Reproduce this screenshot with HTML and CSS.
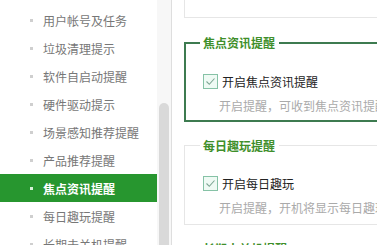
FILE: index.html
```html
<!DOCTYPE html>
<html lang="zh-CN">
<head>
    <meta charset="UTF-8">
    <title>消息提醒设置</title>
    <link rel="stylesheet" href="styles.css">
</head>
<body>
    <div class="page">
        <div class="sidebar">
            <ul class="nav">
                <li class="nav-item">用户帐号及任务</li>
                <li class="nav-item">垃圾清理提示</li>
                <li class="nav-item">软件自启动提醒</li>
                <li class="nav-item">硬件驱动提示</li>
                <li class="nav-item">场景感知推荐提醒</li>
                <li class="nav-item">产品推荐提醒</li>
                <li class="nav-item active">焦点资讯提醒</li>
                <li class="nav-item">每日趣玩提醒</li>
                <li class="nav-item">长期未关机提醒</li>
            </ul>
            <div class="scrollbar">
                <div class="scroll-thumb"></div>
            </div>
        </div>

        <div class="main">
            <div class="group group-prev"></div>

            <div class="group current">
                <div class="group-title">焦点资讯提醒</div>
                <label class="check-row">
                    <span class="checkbox">
                        <svg width="11" height="11" viewBox="0 0 11 11"><polyline points="1.5,5.5 4.3,8.3 9.5,2.5" fill="none" stroke="#7da593" stroke-width="1.1"/></svg>
                    </span>
                    开启焦点资讯提醒
                </label>
                <div class="desc">开启提醒，可收到焦点资讯提醒</div>
            </div>

            <div class="group">
                <div class="group-title">每日趣玩提醒</div>
                <label class="check-row">
                    <span class="checkbox">
                        <svg width="11" height="11" viewBox="0 0 11 11"><polyline points="1.5,5.5 4.3,8.3 9.5,2.5" fill="none" stroke="#7da593" stroke-width="1.1"/></svg>
                    </span>
                    开启每日趣玩
                </label>
                <div class="desc">开启提醒，开机将显示每日趣玩</div>
            </div>

            <div class="group">
                <div class="group-title">长期未关机提醒</div>
            </div>
        </div>
    </div>
</body>
</html>
```

FILE: styles.css
```css
/* Basic Reset */
* {
    margin: 0;
    padding: 0;
    box-sizing: border-box;
}

body {
    font-family: "Noto Sans CJK SC", "Noto Sans", sans-serif;
    font-size: 12px;
    background-color: #fff;
    color: #333;
    overflow: hidden;
}

.page {
    display: flex;
    height: 245px;
    overflow: hidden;
}

/* Left menu */
.sidebar {
    display: flex;
    flex-shrink: 0;
    border-right: 1px solid #dedede;
}

.nav {
    list-style: none;
    width: 157px;
    padding-top: 6px;
}

.nav-item {
    display: flex;
    align-items: center;
    height: 28px;
    padding-left: 43px;
    color: #777;
    white-space: nowrap;
    position: relative;
}

.nav-item::before {
    content: "";
    position: absolute;
    left: 30px;
    top: 13px;
    width: 3px;
    height: 3px;
    background-color: #cfcfcf;
}

.nav-item.active {
    background-color: #27962f;
    color: #fff;
    font-weight: bold;
}

.nav-item.active::before {
    background-color: #d8f0d8;
}

.scrollbar {
    width: 14px;
    background-color: #f7f7f7;
    padding: 103px 2px 0 2px;
}

.scroll-thumb {
    width: 10px;
    height: 200px;
    background-color: #d9d9d9;
    border-radius: 5px 5px 0 0;
}

/* Right settings */
.main {
    flex: 1;
    padding-left: 12px;
    overflow: hidden;
}

.group {
    width: 330px;
    height: 80px;
    border: 1px solid #e6e6e6;
    margin-top: 23px;
    padding-left: 18px;
}

.group-prev {
    height: 18px;
    border-top: none;
    margin-top: 0;
}

.group.current {
    border: 2px solid #3d7b50;
    margin-top: 24px;
    padding-left: 17px;
}

.group-title {
    display: inline-block;
    line-height: 16px;
    margin: -8px 0 0 -3px;
    padding: 0 4px 0 3px;
    background-color: #fff;
    color: #3f8f2b;
    font-weight: bold;
    vertical-align: top;
}

.group.current .group-title {
    margin-top: -9px;
}

.check-row {
    display: flex;
    align-items: center;
    height: 15px;
    margin-top: 13px;
    color: #222;
    white-space: nowrap;
}

.checkbox {
    display: flex;
    align-items: center;
    justify-content: center;
    width: 15px;
    height: 15px;
    margin-right: 4px;
    border: 1px solid #86c2a6;
    background-color: #effaf4;
}

.desc {
    line-height: 16px;
    margin-top: 9px;
    padding-left: 16px;
    color: #aaa;
    white-space: nowrap;
}
```
